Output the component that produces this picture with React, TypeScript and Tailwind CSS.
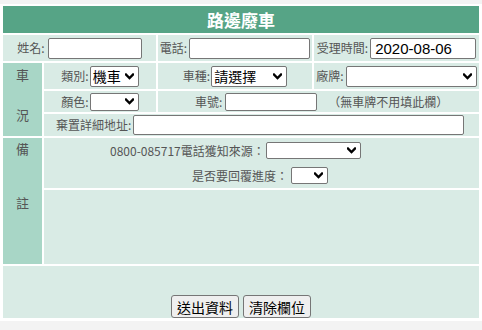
import React from "react";

const font = { fontFamily: '"Noto Sans CJK TC", "Noto Sans", sans-serif' };

function Chevron() {
  return (
    <svg width="9" height="7" viewBox="0 0 9 7" className="shrink-0">
      <polyline points="1,1.5 4.5,5 8,1.5" fill="none" stroke="#000" strokeWidth="2.3" strokeLinecap="square" />
    </svg>
  );
}

function Sel({ w, h, text }: { w: number; h: number; text?: string }) {
  return (
    <div
      className="flex items-center justify-between bg-white border border-[#767676] rounded-[2px] pl-[2px] pr-[4px] text-[14px] text-black leading-none"
      style={{ width: w, height: h }}
    >
      <span>{text ?? ""}</span>
      <Chevron />
    </div>
  );
}

function Inp({ w, h, text }: { w: number; h: number; text?: string }) {
  return (
    <div
      className="flex items-center bg-white border border-[#767676] rounded-[2px] px-[4px] text-[15px] text-black leading-none"
      style={{ width: w, height: h, fontFamily: '"Liberation Sans", Arial, sans-serif' }}
    >
      {text ?? ""}
    </div>
  );
}

export default function App() {
  return (
    <div className="w-[482px] h-[330px] bg-[#f3f3f3] overflow-hidden" style={font}>
      <div className="mt-[4px] bg-white pt-[2px] px-[3px] pb-[3px]">
        <div className="grid grid-cols-[39px_112px_154px_165px] grid-rows-[27px_26px_26px_21px_22px_50px_74px_52px] gap-[2px] text-[12px] text-[#555]">
          {/* header */}
          <div className="col-span-4 bg-[#56a486] flex items-center justify-center text-white font-bold text-[17px]">
            路邊廢車
          </div>

          {/* row 1 */}
          <div className="col-span-2 bg-[#d9ebe5] flex items-center justify-center gap-[3px]">
            <span>姓名:</span>
            <Inp w={94} h={21} />
          </div>
          <div className="bg-[#d9ebe5] flex items-center justify-center gap-[2px]">
            <span>電話:</span>
            <Inp w={121} h={21} />
          </div>
          <div className="bg-[#d9ebe5] flex items-center justify-center gap-[2px]">
            <span>受理時間:</span>
            <Inp w={106} h={21} text="2020-08-06" />
          </div>

          {/* 車況 */}
          <div className="row-span-3 bg-[#a8d6c6] flex flex-col items-center justify-between pt-[4px] pb-[13px] leading-[16px] text-[13px]">
            <span>車</span>
            <span>況</span>
          </div>
          <div className="bg-[#d9ebe5] flex items-center justify-center gap-[1px]">
            <span>類別:</span>
            <Sel w={49} h={21} text="機車" />
          </div>
          <div className="bg-[#d9ebe5] flex items-center justify-center gap-[1px]">
            <span>車種:</span>
            <Sel w={76} h={21} text="請選擇" />
          </div>
          <div className="bg-[#d9ebe5] flex items-center justify-center gap-[2px]">
            <span>廠牌:</span>
            <Sel w={131} h={21} />
          </div>

          {/* row 3 */}
          <div className="bg-[#d9ebe5] flex items-center justify-center gap-[1px]">
            <span>顏色:</span>
            <Sel w={49} h={18} />
          </div>
          <div className="col-span-2 bg-[#d9ebe5] flex items-center pl-[37px]">
            <span>車號:</span>
            <div className="ml-[3px]">
              <Inp w={92} h={18} />
            </div>
            <span className="ml-[11px]">（無車牌不用填此欄）</span>
          </div>

          {/* row 4 */}
          <div className="col-span-3 bg-[#d9ebe5] flex items-center pl-[12px]">
            <span>棄置詳細地址:</span>
            <div className="ml-[2px]">
              <Inp w={331} h={20} />
            </div>
          </div>

          {/* 備註 */}
          <div className="row-span-2 bg-[#a8d6c6] flex flex-col items-center pt-[3px] leading-[16px] text-[13px]">
            <span>備</span>
            <span className="mt-[38px]">註</span>
          </div>
          <div className="col-span-3 bg-[#d9ebe5] flex flex-col pt-[4px] gap-[8px]">
            <div className="flex items-center h-[17px] pl-[66px]">
              <span>0800-085717電話獲知來源：</span>
              <div className="ml-[1px]">
                <Sel w={95} h={17} />
              </div>
            </div>
            <div className="flex items-center h-[17px] pl-[148px]">
              <span>是否要回覆進度：</span>
              <div className="ml-[3px]">
                <Sel w={37} h={17} />
              </div>
            </div>
          </div>
          <div className="col-span-3 bg-[#d9ebe5]" />

          {/* bottom */}
          <div className="col-span-4 bg-[#d9ebe5] flex items-end justify-center gap-[4px]">
            <button className="h-[23px] w-[68px] bg-[#efefef] border border-[#767676] rounded-[3px] text-[14px] text-black leading-none">
              送出資料
            </button>
            <button className="h-[23px] w-[68px] bg-[#efefef] border border-[#767676] rounded-[3px] text-[14px] text-black leading-none">
              清除欄位
            </button>
          </div>
        </div>
      </div>
    </div>
  );
}
